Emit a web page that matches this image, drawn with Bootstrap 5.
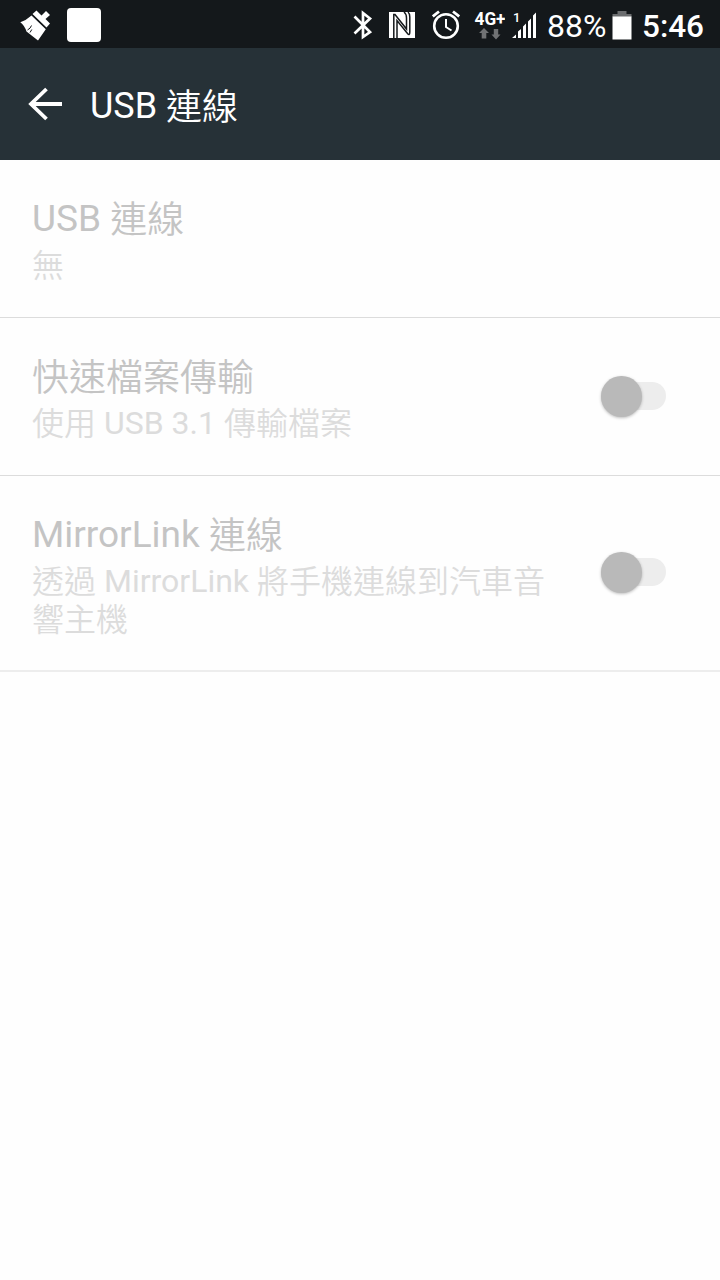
<!DOCTYPE html>
<html lang="zh-Hant">
<head>
<meta charset="utf-8">
<meta name="viewport" content="width=device-width, initial-scale=1">
<title>USB 連線</title>
<link href="https://cdn.jsdelivr.net/npm/bootstrap@5.3.0/dist/css/bootstrap.min.css" rel="stylesheet">
<style>
body { font-family: Roboto, "Noto Sans CJK TC", sans-serif; background: #fefefe; }
.han { font-family: "Noto Sans CJK TC DemiLight", "Noto Sans CJK TC", sans-serif; font-weight: 350; line-height: 1; vertical-align: -2px; }
.setting p .han { vertical-align: -1px; }
.status-bar { height: 48px; background: #14181b; color: #fff; padding-left: 20px; padding-right: 16px; }
.status-bar svg { display: block; flex: none; }
.battery-level { font-size: 32px; line-height: 48px; width: 59px; margin-left: 10px; margin-top: 4px; }
.clock { font-size: 31.5px; font-weight: 500; line-height: 48px; width: 62px; margin-left: 10px; margin-top: 5px; }
.app-bar { height: 112px; background: #263137; padding: 0 0 0 28px; }
.app-title { font-size: 36px; line-height: 44px; margin-left: 27px; color: #fff; font-weight: 400; padding-top: 4px; }
.setting { padding: 37px 54px 0 32px; height: 158px; border-bottom: 1px solid #dcdcdc; }
.setting.tall { height: 196px; border-bottom: 2px solid #ededed; }
.setting h2 { font-size: 37px; line-height: 44px; font-weight: 400; color: #c4c4c4; }
.setting p { font-size: 32px; line-height: 37.5px; color: #dcdcdc; padding-top: 6px; }
.setting-text { width: 530px; }
.switch-track { width: 65px; height: 28px; border-radius: 14px; background: #ededed; }
.switch-knob { width: 40.5px; height: 40.5px; border-radius: 50%; background: #b9b9b9; box-shadow: 0 1px 3px rgba(0,0,0,.25); flex: none; margin-top: 1px; }
.switch-box { height: 82px; }
.tall .switch-box { height: 118px; }
</style>
</head>
<body>
<header>
  <div class="status-bar d-flex align-items-center overflow-hidden">
    <svg width="32" height="48" viewBox="20 0 32 48" fill="#fff">
      <path d="M32.500 14 36.500 10.500 41.500 15.500 46 11 50 15 45.500 19 50 23.500 46.500 27.500Z"/>
      <path d="M31.500 15.500 45.800 29.200 38 40.500 26.500 31.500Q24.500 25.500 20.300 22.300Q26 20.500 31.500 15.500Z"/>
      <path d="M31.500 14.300 46.500 28.500M27.500 30Q30.500 28.500 31.500 25.500M30 32.500 31.800 29.500" stroke="#14181b" stroke-width="1" fill="none"/>
    </svg>
    <svg width="34" height="48" viewBox="67 0 34 48" style="margin-left:15px"><rect x="67" y="8" width="34" height="34" rx="4" fill="#fff"/></svg>
    <svg class="ms-auto" width="20" height="48" viewBox="353 0 20 48" fill="none" stroke="#fff" stroke-width="2.700"><path d="M354.500 16.500 370 32 363 37V13L370 18.500 354.500 33.500"/></svg>
    <svg width="28" height="48" viewBox="388 0 28 48" style="margin-left:15px">
      <rect x="389" y="12" width="26" height="26" fill="#fff"/>
      <path d="M393.800 38V14.500H395L406.500 29V18Q406.500 14 404 12M397 38V20.500L407.500 33.500Q409.800 36 409.800 32V17Q409.800 13.500 408 12" fill="none" stroke="#14181b" stroke-width="1.500"/>
    </svg>
    <svg width="28" height="48" viewBox="432 0 28 48" style="margin-left:16px" fill="none" stroke="#fff">
      <circle cx="446" cy="26" r="11.800" stroke-width="2.600"/>
      <path d="M446 19V27L451.500 30.500" stroke-width="2"/>
      <path d="M432.800 16.500 439 11.500M459.200 16.500 453 11.500" stroke-width="2.800"/>
    </svg>
    <svg width="31" height="48" viewBox="474 0 31 48" style="margin-left:14px">
      <text x="474.500" y="25" font-family="Roboto" font-size="17.500" font-weight="700" fill="#fff" textLength="31" lengthAdjust="spacingAndGlyphs">4G+</text>
      <path d="M484 28 489 33H486.300V38.500H481.700V33H479Z" fill="#707274"/>
      <path d="M496 39.500 491.500 34.500H493.800V29H498.200V34.500H500.500Z" fill="#707274"/>
    </svg>
    <svg width="26" height="48" viewBox="511 0 26 48" style="margin-left:6px" fill="#fff">
      <text x="513" y="21.500" font-family="Roboto" font-size="13" font-weight="500">1</text>
      <path d="M512 38 516 34.500V38ZM518 38V31.500L521 29V38ZM523 38V26.500L526 23.500V38ZM528 38V21.500L531 18.500V38ZM533 38V15.500L536 12.500V38Z"/>
    </svg>
    <span class="battery-level">88%</span>
    <svg width="20" height="48" viewBox="612 0 20 48" style="margin-left:6px">
      <path d="M617.500 11H626.500V14H631.500V17H612.500V14H617.500Z" fill="#6b6d6f"/>
      <rect x="612.500" y="16.500" width="19" height="23" fill="#fff"/>
    </svg>
    <span class="clock">5:46</span>
  </div>
  <nav class="app-bar d-flex align-items-center">
    <svg width="35" height="34" viewBox="0 0 35 34" fill="none" stroke="#fff" stroke-width="3.800"><path d="M34 17H3M18.500 2 3 17 18.500 32"/></svg>
    <h1 class="app-title mb-0">USB <span class="han">連線</span></h1>
  </nav>
</header>
<main>
  <section class="setting">
    <h2 class="mb-0">USB <span class="han">連線</span></h2>
    <p class="mb-0"><span class="han">無</span></p>
  </section>
  <section class="setting d-flex justify-content-between align-items-start">
    <div class="setting-text">
      <h2 class="mb-0"><span class="han">快速檔案傳輸</span></h2>
      <p class="mb-0"><span class="han">使用</span> USB 3.1 <span class="han">傳輸檔案</span></p>
    </div>
    <div class="switch-box d-flex align-items-center"><div class="switch-track d-flex align-items-center"><div class="switch-knob"></div></div></div>
  </section>
  <section class="setting tall d-flex justify-content-between align-items-start">
    <div class="setting-text">
      <h2 class="mb-0">MirrorLink <span class="han">連線</span></h2>
      <p class="mb-0"><span class="han">透過</span> MirrorLink <span class="han">將手機連線到汽車音</span><span class="han">響主機</span></p>
    </div>
    <div class="switch-box d-flex align-items-center"><div class="switch-track d-flex align-items-center"><div class="switch-knob"></div></div></div>
  </section>
</main>
<script src="https://cdn.jsdelivr.net/npm/bootstrap@5.3.0/dist/js/bootstrap.bundle.min.js"></script>
</body>
</html>
